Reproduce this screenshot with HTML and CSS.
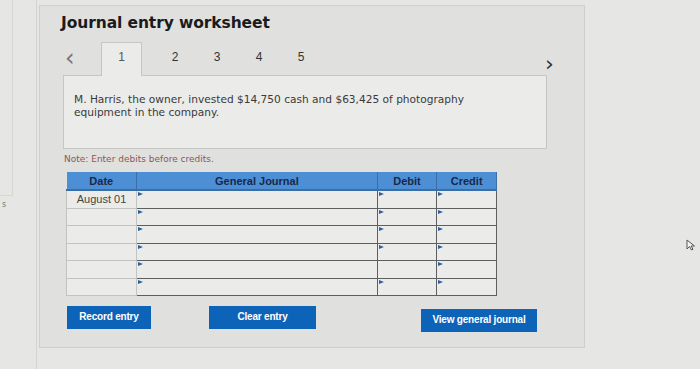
FILE: index.html
```html
<!DOCTYPE html>
<html lang="en">
<head>
  <meta charset="UTF-8" />
  <title>Journal entry worksheet</title>
  <link rel="stylesheet" href="styles.css">
</head>
<body>
<div class="page">
  <div class="side">
    <div class="side-box"><span>s</span></div>
  </div>

  <div class="panel">
    <h1>Journal entry worksheet</h1>

    <div class="tabs">
      <span class="arrow">&lsaquo;</span>
      <span class="tab active">1</span>
      <span class="tab first">2</span>
      <span class="tab">3</span>
      <span class="tab">4</span>
      <span class="tab">5</span>
      <span class="arrow next">&rsaquo;</span>
    </div>

    <div class="desc">
      M. Harris, the owner, invested $14,750 cash and $63,425 of photography<br>
      equipment in the company.
    </div>

    <p class="note">Note: Enter debits before credits.</p>

    <table class="journal">
      <thead>
        <tr>
          <th class="c-date">Date</th>
          <th class="c-acct">General Journal</th>
          <th class="c-num">Debit</th>
          <th class="c-num">Credit</th>
        </tr>
      </thead>
      <tbody>
        <tr><td class="date">August 01</td><td class="in"></td><td class="in"></td><td class="in"></td></tr>
        <tr><td class="date"></td><td class="in"></td><td class="in"></td><td class="in"></td></tr>
        <tr><td class="date"></td><td class="in"></td><td class="in"></td><td class="in"></td></tr>
        <tr><td class="date"></td><td class="in"></td><td class="in"></td><td class="in"></td></tr>
        <tr><td class="date"></td><td class="in"></td><td class="dotted"></td><td class="in"></td></tr>
        <tr><td class="date"></td><td class="in"></td><td class="in"></td><td class="in"></td></tr>
      </tbody>
    </table>

    <div class="actions">
      <button class="btn rec">Record entry</button>
      <button class="btn clr">Clear entry</button>
      <button class="btn view">View general journal</button>
    </div>
  </div>

  <div class="cursor">
    <svg width="10" height="12" viewBox="0 0 10 12"><path d="M1 1 L1 10 L3.5 7.5 L5.5 11 L7 10.3 L5 7 L8.5 7 Z" fill="#f4f4f2" stroke="#555" stroke-width="1"/></svg>
  </div>
</div>
</body>
</html>
```

FILE: styles.css
```css
body {
  margin: 0;
  font-family: "DejaVu Sans", Verdana, sans-serif;
  background: #e5e6e4;
}
.page {
  width: 700px;
  height: 369px;
  display: flex;
  position: relative;
  overflow: hidden;
  background: #e6e7e5;
}
.side {
  width: 36px;
  flex: none;
  border-right: 1px solid #d3d4d2;
}
.side-box {
  height: 195px;
  border-bottom: 1px solid #d6d7d5;
  border-right: 1px solid #d6d7d5;
  width: 12px;
  position: relative;
}
.side-box span {
  position: absolute;
  left: 2px;
  top: 200px;
  font-size: 8px;
  color: #777;
}
.panel {
  width: 546px;
  height: 343px;
  margin: 5px 0 0 2px;
  background: #e0e1df;
  border: 1px solid #cfd0ce;
  box-sizing: border-box;
  padding: 8px 0 0 21px;
}
h1 {
  margin: 0;
  font-size: 15.5px;
  font-weight: bold;
  color: #1b1b1b;
  letter-spacing: -0.1px;
}
.tabs {
  display: flex;
  align-items: flex-end;
  height: 34px;
  margin-top: 9px;
  position: relative;
}
.arrow {
  font-size: 24px;
  line-height: 24px;
  color: #777;
  width: 40px;
  padding-left: 4px;
  box-sizing: border-box;
  align-self: center;
}
.arrow.next {
  position: absolute;
  left: 480px;
  top: 11px;
  width: auto;
  color: #333;
  font-size: 22px;
}
.tab {
  width: 42px;
  height: 34px;
  box-sizing: border-box;
  font-family: "Liberation Sans", Arial, sans-serif;
  font-size: 12px;
  color: #333;
  display: flex;
  align-items: center;
  justify-content: center;
  padding-bottom: 3px;
}
.tab.first { margin-left: 12px; }
.tab.active {
  width: 41px;
  background: #ebebea;
  border: 1px solid #c6c7c5;
  border-bottom: none;
  position: relative;
  top: 1px;
  color: #555;
  padding-bottom: 5px;
}
.desc {
  width: 484px;
  height: 74px;
  margin-left: 2px;
  box-sizing: border-box;
  background: #ebebea;
  border: 1px solid #c6c7c5;
  padding: 17px 10px 0;
  font-size: 10.6px;
  line-height: 13px;
  color: #3a3a3a;
}
.note {
  margin: 5px 0 0 3px;
  font-size: 9px;
  color: #8d5656;
}
.journal {
  margin: 8px 0 0 5px;
  border-collapse: collapse;
  width: 431px;
  font-family: "Liberation Sans", Arial, sans-serif;
}
.journal th {
  background: #4d8fd5;
  color: #17294a;
  font-size: 11px;
  font-weight: bold;
  height: 17px;
  padding: 0;
  border-right: 1px solid #3a6fa8;
  border-bottom: 2px solid #3b6ea3;
}
.c-date { width: 70px; }
.c-acct { width: 242px; }
.c-num { width: 59px; }
.journal td {
  height: 16.5px;
  padding: 0;
  background: #ebebea;
}
.journal td.date {
  border: 1px solid #c3c3c1;
  color: #444;
  font-size: 11px;
  text-align: center;
}
.journal td.in {
  border: 1.5px solid #5c5e60;
  position: relative;
}
.journal td.in::before {
  content: "";
  position: absolute;
  left: 1px;
  top: 1px;
  border-left: 5px solid #2d5f9c;
  border-top: 2px solid transparent;
  border-bottom: 2px solid transparent;
}
.journal td.dotted {
  border: 1px dashed #8a8a8a;
}
.actions {
  display: flex;
  align-items: flex-start;
  margin: 10px 0 0 6px;
}
.btn {
  font-family: "Liberation Sans", Arial, sans-serif;
  font-size: 10px;
  font-weight: bold;
  color: #fff;
  background: #0d63b7;
  border: none;
  height: 23px;
  padding: 0 0 2px;
  letter-spacing: -0.2px;
}
.rec { width: 84px; }
.clr { width: 107px; margin-left: 58px; }
.view { width: 116px; margin-left: 105px; margin-top: 3px; }
.cursor {
  position: absolute;
  left: 686px;
  top: 236px;
}
```
